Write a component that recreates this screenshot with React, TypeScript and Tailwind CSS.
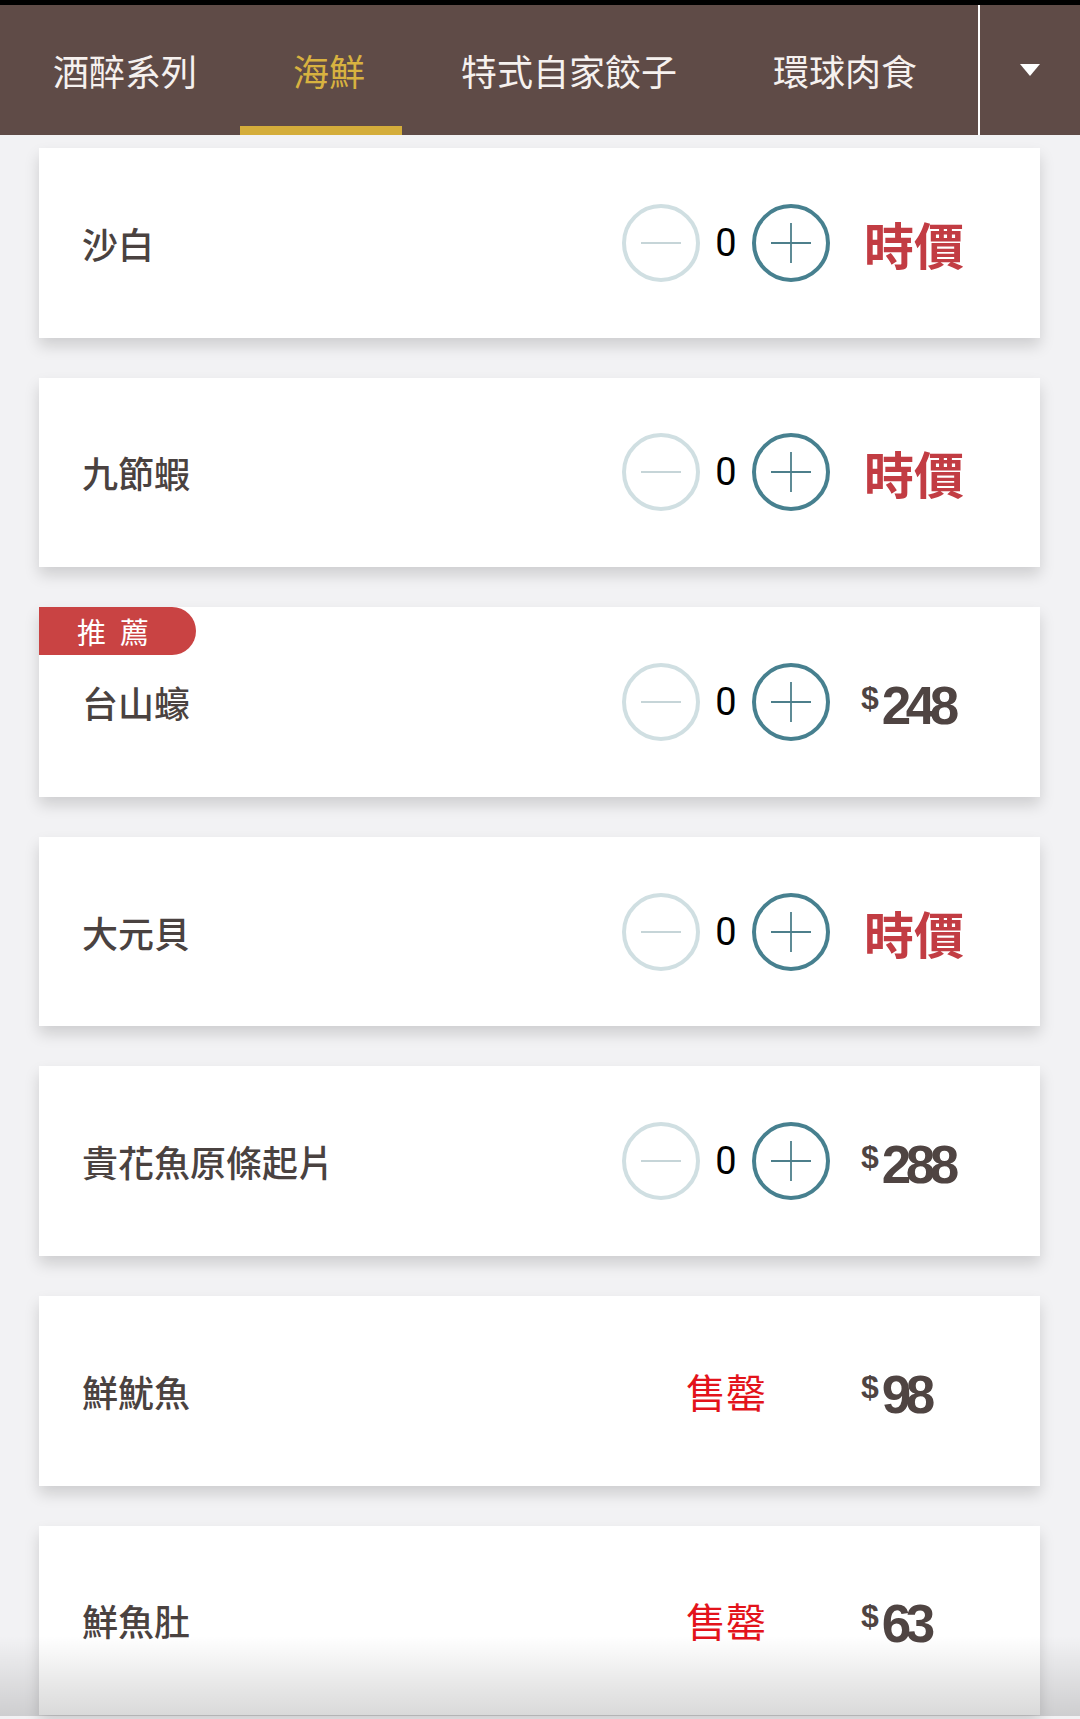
import React from "react";

type Item = {
  name: string;
  price?: number;
  market?: boolean;
  soldOut?: boolean;
  badge?: string;
};

const tabs = ["酒醉系列", "海鮮", "特式自家餃子", "環球肉食"];

const items: Item[] = [
  { name: "沙白", market: true },
  { name: "九節蝦", market: true },
  { name: "台山蠔", price: 248, badge: "推薦" },
  { name: "大元貝", market: true },
  { name: "貴花魚原條起片", price: 288 },
  { name: "鮮魷魚", price: 98, soldOut: true },
  { name: "鮮魚肚", price: 63, soldOut: true },
];

const cjk = "font-['Noto_Sans_CJK_TC','Noto_Sans',sans-serif]";

function MinusButton() {
  return (
    <button className="w-[78px] h-[78px] rounded-full border-[4px] border-[#d0dfe2] flex items-center justify-center shrink-0">
      <svg width="40" height="40" viewBox="0 0 40 40">
        <line x1="0" y1="20" x2="40" y2="20" stroke="#c6d5d8" strokeWidth="1.8" />
      </svg>
    </button>
  );
}

function PlusButton() {
  return (
    <button className="w-[78px] h-[78px] rounded-full border-[4px] border-[#47808f] flex items-center justify-center shrink-0">
      <svg width="40" height="40" viewBox="0 0 40 40">
        <line x1="0" y1="20" x2="40" y2="20" stroke="#4d7f8b" strokeWidth="1.8" />
        <line x1="20" y1="0" x2="20" y2="40" stroke="#4d7f8b" strokeWidth="1.8" />
      </svg>
    </button>
  );
}

function MenuCard({ item }: { item: Item }) {
  return (
    <div className="relative h-[189.6px] shrink-0 bg-white flex items-center shadow-[0_8px_14px_rgba(0,0,0,0.15)]">
      {/* recommended badge */}
      {item.badge && (
        <div
          className={`absolute left-0 top-0 h-[48px] w-[157px] bg-[#c94343] rounded-r-full flex items-center pl-[38px] text-white text-[29px] tracking-[14px] leading-none ${cjk}`}
        >
          {item.badge}
        </div>
      )}

      <div
        className={`flex-1 pl-[43px] text-[36px] font-medium text-[#4a4240] leading-none ${cjk}`}
      >
        {item.name}
      </div>

      {/* qty controls / sold out */}
      <div className="w-[210px] flex items-center justify-center">
        {item.soldOut ? (
          <span className={`text-[40px] leading-none text-[#e3131b] ${cjk}`}>售罄</span>
        ) : (
          <div className="flex items-center gap-[14px]">
            <MinusButton />
            <span className="w-[24px] text-center text-[38px] leading-none text-black font-['Roboto','Liberation_Sans',Arial,sans-serif]">
              0
            </span>
            <PlusButton />
          </div>
        )}
      </div>

      {/* price */}
      <div className="ml-[30px] w-[179px] flex items-center">
        {item.market ? (
          <span
            className={`pl-[3px] text-[50px] font-bold leading-none text-[#c23c43] ${cjk}`}
          >
            時價
          </span>
        ) : (
          <div className="flex items-start pt-[7px] text-[#4f4442] font-['Liberation_Sans',Arial,sans-serif] font-bold">
            <span className="text-[32px] leading-none mt-[3px]">$</span>
            <span className="ml-[3px] text-[53px] leading-none tracking-[-5.5px]">
              {item.price}
            </span>
          </div>
        )}
      </div>
    </div>
  );
}

export default function App() {
  return (
    <div className="relative w-[1080px] h-[1719px] overflow-hidden bg-[#f2f2f4]">
      {/* HEADER */}
      <div className="h-[135px] border-t-[5px] border-black bg-[#5f4b47] flex items-stretch pl-[5px]">
        {tabs.map((t, i) => (
          <div
            key={t}
            className={`relative px-[48px] flex items-center text-[36px] leading-none ${cjk} ${
              i === 1 ? "text-[#d8b240]" : "text-[#f6f1ef]"
            }`}
          >
            {t}
            {i === 1 && (
              <div className="absolute bottom-0 left-[-5px] right-[11px] h-[9px] bg-[#d4ad3b]" />
            )}
          </div>
        ))}
        <div className="ml-auto w-[102px] border-l-2 border-white flex items-center justify-center">
          <svg width="20" height="12" viewBox="0 0 20 12">
            <polygon points="0,0 20,0 10,12" fill="#ffffff" />
          </svg>
        </div>
      </div>

      {/* LIST */}
      <div className="flex flex-col gap-[40px] pt-[13px] pl-[39px] pr-[40px]">
        {items.map((it) => (
          <MenuCard key={it.name} item={it} />
        ))}
      </div>

      {/* bottom fade */}
      <div className="absolute left-0 right-0 bottom-[3px] h-[80px] bg-gradient-to-b from-transparent to-black/15 pointer-events-none" />
    </div>
  );
}
